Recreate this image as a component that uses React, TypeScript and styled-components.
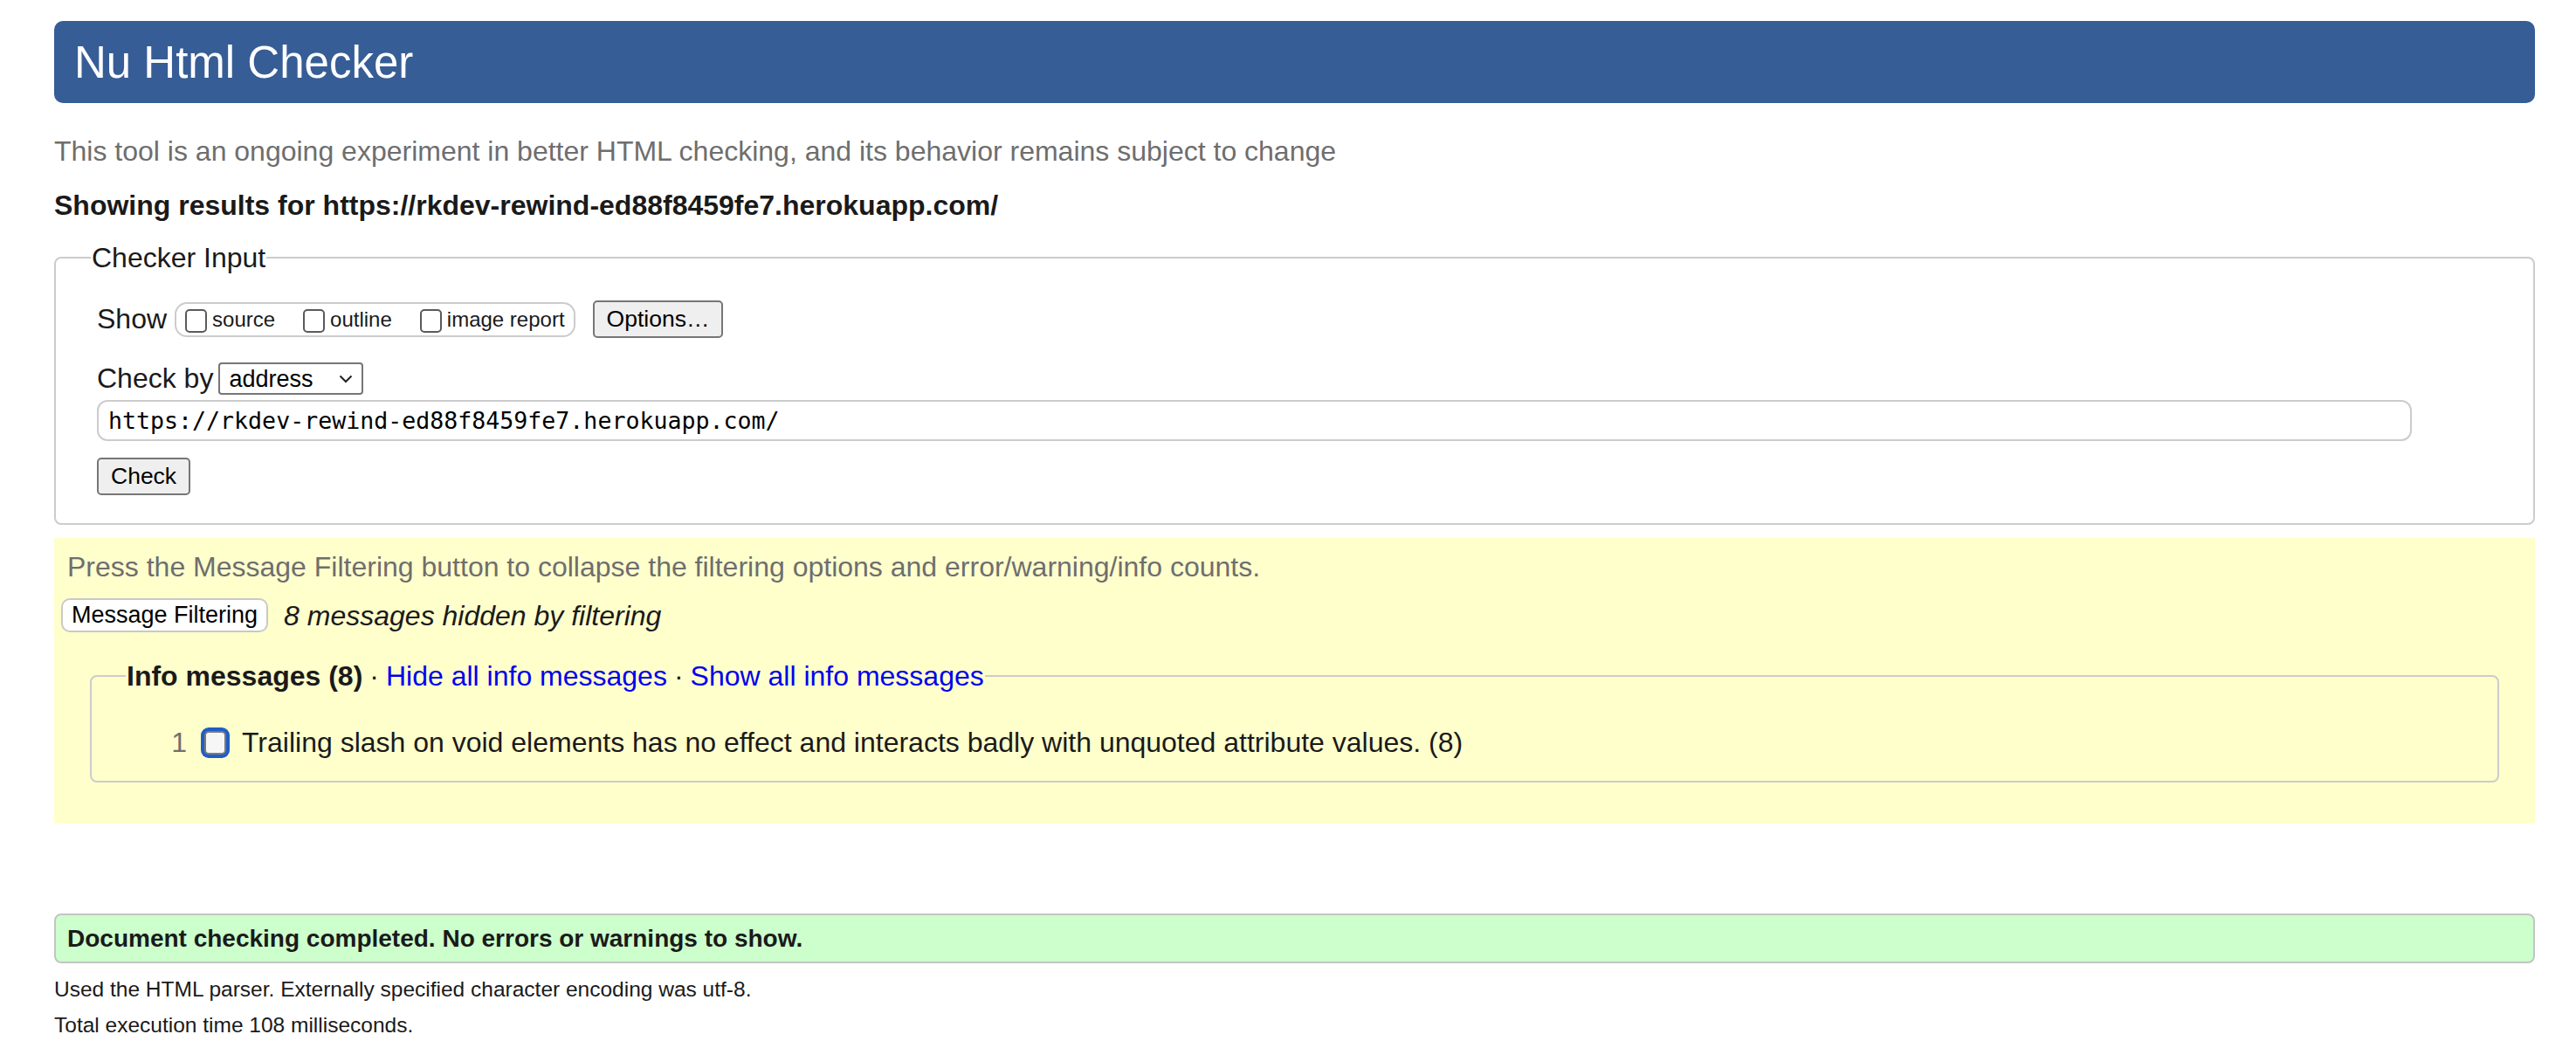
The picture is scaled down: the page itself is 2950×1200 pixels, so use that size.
import styled, { createGlobalStyle } from 'styled-components'

const GlobalStyle = createGlobalStyle`
  body {
    margin: 0;
    background: #ffffff;
    color: #1a1a1a;
    font-family: "Liberation Sans", Arial, Helvetica, sans-serif;
    font-size: 32px;
  }
`

const Page = styled.div`
  padding: 24px 47px 20px 62px;
`

const Header = styled.h1`
  display: flex;
  align-items: center;
  height: 94px;
  margin: 0;
  padding-left: 23px;
  background: #365d95;
  border-radius: 10px;
  color: #ffffff;
  font-size: 51px;
  font-weight: normal;
`

const Intro = styled.p`
  margin: 37px 0 0;
  line-height: 36px;
  color: #6e6e6e;
`

const Showing = styled.p`
  margin: 26px 0 0;
  line-height: 36px;
  font-weight: bold;
`

const Fieldset = styled.fieldset<{ $inset?: boolean }>`
  margin: ${({ $inset }) => ($inset ? '32px 41px 0 41px' : '24px 0 0')};
  padding: 0;
  border: 2px solid #cccccc;
  border-radius: 8px;
  min-width: 0;
`

const Legend = styled.legend<{ $offset: number }>`
  margin-left: ${({ $offset }) => $offset}px;
  padding: 0 1px;
  line-height: 36px;
`

const InputBody = styled.div`
  padding: 31px 0 32px 47px;
`

const Row = styled.div<{ $gap?: number; $mt?: number; $ml?: number }>`
  display: flex;
  align-items: center;
  gap: ${({ $gap }) => $gap ?? 0}px;
  margin-top: ${({ $mt }) => $mt ?? 0}px;
  margin-left: ${({ $ml }) => $ml ?? 0}px;
`

const Label = styled.span`
  display: inline-flex;
  align-items: center;
  line-height: 37px;
`

const CheckGroup = styled.span`
  display: inline-flex;
  align-items: center;
  height: 40px;
  box-sizing: border-box;
  margin-left: 9px;
  padding: 0 10px 0 10px;
  border: 2px solid #cccccc;
  border-radius: 14px;
  font-size: 24px;
`

const Choice = styled.label`
  display: inline-flex;
  align-items: flex-end;
  margin-right: 32px;
  &:last-child {
    margin-right: 0;
  }
`

const Box = styled.input<{ $focus?: boolean }>`
  appearance: none;
  flex: none;
  width: 25px;
  height: 27px;
  margin: ${({ $focus }) => ($focus ? '0 18px 0 20px' : '0 6px 3px 0')};
  border: 2px solid ${({ $focus }) => ($focus ? '#7a7a7a' : '#5a5a5a')};
  border-radius: 5px;
  background: ${({ $focus }) => ($focus ? '#f6f6f6' : '#ffffff')};
  box-shadow: ${({ $focus }) => ($focus ? '0 0 0 4px #1f5ec7' : 'none')};
`

const Button = styled.button<{ $soft?: boolean }>`
  height: ${({ $soft }) => ($soft ? 39 : 43)}px;
  padding: 0 ${({ $soft }) => ($soft ? 10 : 14)}px;
  border: 2px solid ${({ $soft }) => ($soft ? '#c9c9c9' : '#767676')};
  border-radius: ${({ $soft }) => ($soft ? 10 : 5)}px;
  background: ${({ $soft }) => ($soft ? '#ffffff' : '#efefef')};
  color: #000000;
  font-family: "Liberation Sans", Arial, sans-serif;
  font-size: ${({ $soft }) => ($soft ? 27 : 26.5)}px;
`

const SelectWrap = styled.span`
  position: relative;
  display: inline-flex;
  margin-left: 6px;
`

const Select = styled.select`
  appearance: none;
  width: 166px;
  height: 37px;
  padding: 0 0 0 10px;
  border: 2px solid #767676;
  border-radius: 4px;
  background: #ffffff;
  color: #000000;
  font-family: "Liberation Sans", Arial, sans-serif;
  font-size: 27px;
`

const Chevron = styled.svg`
  position: absolute;
  right: 12px;
  top: 14px;
  pointer-events: none;
`

const UrlInput = styled.input`
  display: block;
  width: 2651px;
  height: 47px;
  box-sizing: border-box;
  margin-top: 6px;
  padding: 0 11px;
  border: 2px solid #cccccc;
  border-radius: 12px;
  background: #ffffff;
  color: #000000;
  font-family: "DejaVu Sans Mono", "Liberation Mono", monospace;
  font-size: 26.6px;
`

const Filtering = styled.section`
  margin-top: 15px;
  padding: 15px 0 47px;
  background: #ffffcc;
`

const Note = styled.p`
  margin: 0 0 0 15px;
  line-height: 36px;
  color: #6e6e6e;
`

const Hidden = styled.em`
  margin-left: 18px;
  line-height: 36px;
`

const Strong = styled.strong`
  font-weight: bold;
`

const Dot = styled.span`
  margin: 0 8px;
`

const Link = styled.a`
  color: #0000ee;
  text-decoration: none;
`

const Message = styled.div`
  display: flex;
  align-items: center;
  padding: 40px 0 25px;
  line-height: 37px;
`

const Num = styled.span`
  width: 109px;
  text-align: right;
  color: #6f6f6f;
`

const Done = styled.div`
  display: flex;
  align-items: center;
  height: 57px;
  box-sizing: border-box;
  margin-top: 103px;
  padding-left: 13px;
  background: #ccffcc;
  border: 2px solid #c4c4c4;
  border-radius: 8px;
  font-size: 28px;
  font-weight: bold;
`

const Small = styled.p<{ $mt: number }>`
  margin: ${({ $mt }) => $mt}px 0 0;
  line-height: 30px;
  font-size: 24.5px;
`

const url = 'https://rkdev-rewind-ed88f8459fe7.herokuapp.com/'

const App = () => (
  <>
    <GlobalStyle />
    <Page>
      <Header>Nu Html Checker</Header>
      <Intro>
        This tool is an ongoing experiment in better HTML checking, and its behavior remains subject to change
      </Intro>
      <Showing>Showing results for {url}</Showing>

      <Fieldset>
        <Legend $offset={40}>Checker Input</Legend>
        <InputBody>
          <Row $gap={20}>
            <Label>
              Show
              <CheckGroup>
                <Choice>
                  <Box type="checkbox" />
                  source
                </Choice>
                <Choice>
                  <Box type="checkbox" />
                  outline
                </Choice>
                <Choice>
                  <Box type="checkbox" />
                  image report
                </Choice>
              </CheckGroup>
            </Label>
            <Button>Options…</Button>
          </Row>
          <Row $mt={28}>
            <Label>Check by</Label>
            <SelectWrap>
              <Select defaultValue="address">
                <option value="address">address</option>
              </Select>
              <Chevron width="16" height="10" viewBox="0 0 16 10">
                <path d="M1.5 1.5 L8 8 L14.5 1.5" fill="none" stroke="#222" strokeWidth="2" />
              </Chevron>
            </SelectWrap>
          </Row>
          <UrlInput defaultValue={url} />
          <Row $mt={19}>
            <Button>Check</Button>
          </Row>
        </InputBody>
      </Fieldset>

      <Filtering>
        <Note>Press the Message Filtering button to collapse the filtering options and error/warning/info counts.</Note>
        <Row $mt={18} $ml={8}>
          <Button $soft>Message Filtering</Button>
          <Hidden>8 messages hidden by filtering</Hidden>
        </Row>
        <Fieldset $inset>
          <Legend $offset={39}>
            <Strong>Info messages (8)</Strong>
            <Dot>·</Dot>
            <Link href="#">Hide all info messages</Link>
            <Dot>·</Dot>
            <Link href="#">Show all info messages</Link>
          </Legend>
          <Message>
            <Num>1</Num>
            <Box type="checkbox" $focus />
            <span>
              Trailing slash on void elements has no effect and interacts badly with unquoted attribute values. (8)
            </span>
          </Message>
        </Fieldset>
      </Filtering>

      <Done>Document checking completed. No errors or warnings to show.</Done>
      <Small $mt={15}>Used the HTML parser. Externally specified character encoding was utf-8.</Small>
      <Small $mt={11}>Total execution time 108 milliseconds.</Small>
    </Page>
  </>
)

export default App
